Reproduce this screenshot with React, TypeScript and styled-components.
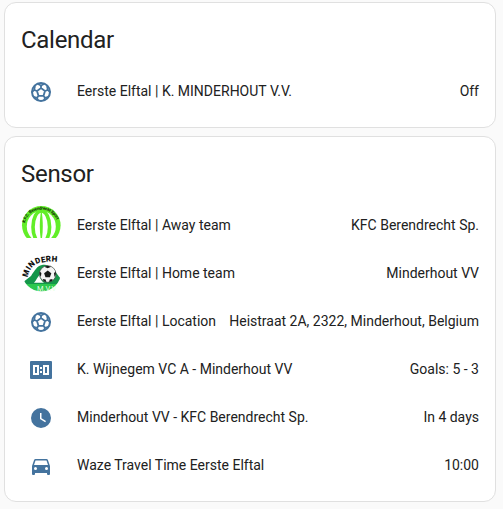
import React from "react";
import styled, { createGlobalStyle } from "styled-components";

const GlobalStyle = createGlobalStyle`
  body {
    margin: 0;
    background: #fafafa;
    color: #212121;
    font-family: Roboto, "Liberation Sans", sans-serif;
  }
`;

const View = styled.main`
  box-sizing: border-box;
  width: 503px;
  height: 509px;
  padding: 2px 7px 7px 4px;
  display: flex;
  flex-direction: column;
  gap: 8px;
`;

const Card = styled.section`
  border: 1px solid #e0e0e0;
  border-radius: 12px;
  background: #fff;
  padding: 13px 16px 16px;
`;

const CardTitle = styled.h1`
  margin: 0 0 7px;
  font-size: 24px;
  font-weight: 400;
  line-height: 48px;
  letter-spacing: -0.012em;
`;

const Rows = styled.div`
  display: flex;
  flex-direction: column;
  gap: 8px;
`;

const Row = styled.div`
  display: flex;
  align-items: center;
  height: 40px;
  font-size: 14px;
  line-height: 20px;
  white-space: nowrap;
`;

const Badge = styled.div`
  flex: 0 0 40px;
  height: 40px;
  display: flex;
  align-items: center;
  justify-content: center;
  color: #44739e;
`;

const Glyph = styled.svg`
  display: block;
  width: 24px;
  height: 24px;
  margin-top: 2px;
  fill: currentColor;
`;

const Crest = styled.svg`
  display: block;
  width: 40px;
  height: 40px;
`;

const Name = styled.div`
  flex: 1;
  margin-left: 16px;
`;

const State = styled.div`
  text-align: right;
`;

const SoccerIcon = () => (
  <Glyph viewBox="0 0 24 24">
    <g fill="none" stroke="currentColor">
      <circle cx="12" cy="12" r="9" strokeWidth="2" />
      <path
        d="M12 8 16 11l-1.500 4.800h-5L8 11ZM12 8V5.200M16 11l3-1.100M14.500 15.800l1.700 2.400M9.500 15.800l-1.700 2.400M8 11 5 9.900"
        strokeWidth="1.800"
      />
      <path
        d="M8.500 3.800 12 5.600 15.500 3.800M18 6 18.800 9.900 21.200 12.500M19.700 16.900 16.200 17.800 14.600 20.700M9.400 20.700 7.800 17.800 4.300 16.900M2.800 12.500 5.200 9.900 6 6"
        strokeWidth="1.700"
      />
    </g>
  </Glyph>
);

const ScoreboardIcon = () => (
  <Glyph viewBox="0 0 24 24">
    <path
      fillRule="evenodd"
      d="M2 3H22A1 1 0 0 1 23 4V20A1 1 0 0 1 22 21H2A1 1 0 0 1 1 20V4A1 1 0 0 1 2 3ZM4 7V17H10V7ZM6 9H8V15H6ZM14 7V17H20V7ZM16 9H18V15H16ZM11 9V11H13V9ZM11 13V15H13V13Z"
    />
  </Glyph>
);

const ClockIcon = () => (
  <Glyph viewBox="0 0 24 24">
    <path d="M12 2A10 10 0 0 0 2 12A10 10 0 0 0 12 22A10 10 0 0 0 22 12A10 10 0 0 0 12 2M16.2 16.2L11 13V7H12.5V12.2L17 14.9L16.2 16.2Z" />
  </Glyph>
);

const CarIcon = () => (
  <Glyph viewBox="0 0 24 24">
    <path d="M5,11L6.5,6.5H17.5L19,11M17.5,16A1.5,1.5 0 0,1 16,14.5A1.5,1.5 0 0,1 17.5,13A1.5,1.5 0 0,1 19,14.5A1.5,1.5 0 0,1 17.5,16M6.5,16A1.5,1.5 0 0,1 5,14.5A1.5,1.5 0 0,1 6.5,13A1.5,1.5 0 0,1 8,14.5A1.5,1.5 0 0,1 6.5,16M18.92,6C18.72,5.42 18.16,5 17.5,5H6.5C5.84,5 5.28,5.42 5.08,6L3,12V20A1,1 0 0,0 4,21H5A1,1 0 0,0 6,20V19H18V20A1,1 0 0,0 19,21H20A1,1 0 0,0 21,20V12L18.92,6Z" />
  </Glyph>
);

const BerendrechtCrest = () => (
  <Crest viewBox="0 0 40 40">
    <defs>
      <clipPath id="berendrecht-cut">
        <rect width="40" height="33" />
      </clipPath>
      <path id="berendrecht-arc" d="M4 18.500A16.500 16.500 0 0 1 36.600 18.500" />
    </defs>
    <g clipPath="url(#berendrecht-cut)">
      <circle cx="20.300" cy="20.300" r="19.300" fill="#62ee28" />
      <ellipse cx="20.300" cy="21.500" rx="14.500" ry="15.500" fill="#fff" />
      <ellipse cx="20.300" cy="22" rx="8.300" ry="16" fill="none" stroke="#62ee28" strokeWidth="3.600" />
      <path d="M20.300 5C18.300 14 18.300 28 20.300 37C22.300 28 22.300 14 20.300 5Z" fill="#62ee28" />
      <text fontSize="4.200" fontWeight="900" fill="#123209" fontFamily="Roboto, sans-serif">
        <textPath href="#berendrecht-arc" startOffset="0.500" textLength="42">
          K.F.C. Berendrecht Sport
        </textPath>
      </text>
    </g>
  </Crest>
);

const MinderhoutCrest = () => (
  <Crest viewBox="0 0 40 40">
    <defs>
      <path id="minderhout-arc" d="M6.800 24.500C7.200 18 12.500 10.500 20 9.800C26 8.700 30 8 37 9" />
      <clipPath id="minderhout-disc">
        <circle cx="20.500" cy="19" r="19.500" />
      </clipPath>
    </defs>
    <g clipPath="url(#minderhout-disc)">
      <path d="M1 30 10 23C14 17 16 13 21 12C28 10 34 18 40 26V31H1Z" fill="#15964a" />
      <path d="M13 29.800C15.500 27 16.500 24 18.500 22C19 25 20 28 23 29.800Z" fill="#fff" />
      <path d="M1 31H40V38.500H1Z" fill="#2cc84d" />
      <circle cx="26.700" cy="21" r="8.300" fill="#f4f4f4" stroke="#445049" strokeWidth="0.700" />
      <g fill="#161a18" transform="translate(.2 .5)">
        <path d="m26.500 17 3.600 2.700-1.400 4h-4.400l-1.400-4Z" />
        <path d="M23 13.300 26.500 14.700 30 13.300 26.500 12.300ZM18.400 18l1.800 1.500-.5 4-1.300-2.500ZM34.600 18l-1.800 1.500.5 4 1.300-2.500ZM21.500 25.500l3 .5.5 2.500-2.500-.8ZM31.500 25.500l-3 .5-.5 2.500 2.500-.8Z" />
      </g>
    </g>
    <text fontSize="8" fontWeight="900" fill="#111" fontFamily="Roboto, sans-serif">
      <textPath href="#minderhout-arc" textLength="37.500">
        MINDERH
      </textPath>
    </text>
    <text x="16" y="37.700" fontSize="7.500" fill="#e5ffe5" fontFamily="Roboto, sans-serif">
      M.V.V
    </text>
  </Crest>
);

interface Entity {
  icon: React.ReactNode;
  name: string;
  state: string;
}

const calendar: Entity[] = [
  { icon: <SoccerIcon />, name: "Eerste Elftal | K. MINDERHOUT V.V.", state: "Off" },
];

const sensors: Entity[] = [
  { icon: <BerendrechtCrest />, name: "Eerste Elftal | Away team", state: "KFC Berendrecht Sp." },
  { icon: <MinderhoutCrest />, name: "Eerste Elftal | Home team", state: "Minderhout VV" },
  { icon: <SoccerIcon />, name: "Eerste Elftal | Location", state: "Heistraat 2A, 2322, Minderhout, Belgium" },
  { icon: <ScoreboardIcon />, name: "K. Wijnegem VC A - Minderhout VV", state: "Goals: 5 - 3" },
  { icon: <ClockIcon />, name: "Minderhout VV - KFC Berendrecht Sp.", state: "In 4 days" },
  { icon: <CarIcon />, name: "Waze Travel Time Eerste Elftal", state: "10:00" },
];

const EntityCard = ({ title, entities }: { title: string; entities: Entity[] }) => (
  <Card>
    <CardTitle>{title}</CardTitle>
    <Rows>
      {entities.map((entity) => (
        <Row key={entity.name}>
          <Badge>{entity.icon}</Badge>
          <Name>{entity.name}</Name>
          <State>{entity.state}</State>
        </Row>
      ))}
    </Rows>
  </Card>
);

export default function App() {
  return (
    <>
      <GlobalStyle />
      <View>
        <EntityCard title="Calendar" entities={calendar} />
        <EntityCard title="Sensor" entities={sensors} />
      </View>
    </>
  );
}
